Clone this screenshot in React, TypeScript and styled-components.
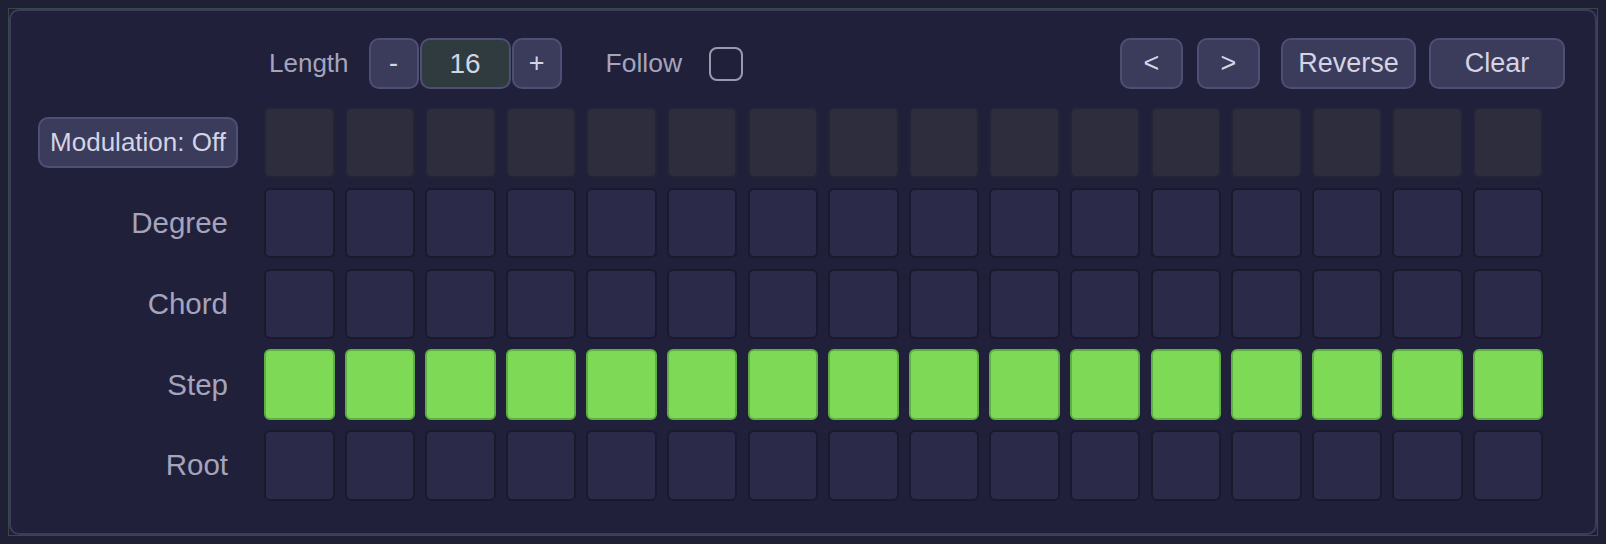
import React from "react";
import styled, { createGlobalStyle } from "styled-components";

const Global = createGlobalStyle`
  html, body { background: #1f1f35; }
  body { margin: 8px; font-family: "Liberation Sans", Arial, sans-serif; }
  * { box-sizing: border-box; }
`;

const Frame = styled.div`
  height: 528px;
  border: 1px solid #3a4748;
  background: #1f1f35;
  display: flex;
`;

const Panel = styled.div`
  flex: 1;
  border: 2px solid #3b3b5c;
  border-radius: 10px;
  background: #20203a;
  padding: 27px 30px 0 27px;
  display: flex;
  flex-direction: column;
`;

const Toolbar = styled.div`
  display: flex;
  align-items: center;
  height: 51px;
  padding-left: 231px;
`;

const ToolLabel = styled.span<{ $gap?: number; $ml?: number; $size?: number }>`
  font-size: ${(p) => p.$size ?? 26}px;
  color: #a4a4bc;
  margin-left: ${(p) => p.$ml ?? 0}px;
  margin-right: ${(p) => p.$gap ?? 20}px;
`;

const Btn = styled.button<{ $w: number; $ml?: number }>`
  width: ${(p) => p.$w}px;
  height: 51px;
  margin-left: ${(p) => p.$ml ?? 0}px;
  background: #3b3b5b;
  border: 2px solid #4f4f74;
  border-radius: 10px;
  color: #d4d4e4;
  font-family: "Liberation Sans", Arial, sans-serif;
  font-size: 27px;
  padding: 0;
  display: flex;
  align-items: center;
  justify-content: center;
`;

const ValueBox = styled.div`
  width: 91px;
  height: 51px;
  margin: 0 1px;
  background: #2f3b3e;
  border: 2px solid #4f4f74;
  border-radius: 10px;
  color: #d4d4e4;
  font-size: 28px;
  display: flex;
  align-items: center;
  justify-content: center;
`;

const Check = styled.div`
  width: 34px;
  height: 34px;
  border: 2px solid #9a9aae;
  border-radius: 8px;
`;

const Spacer = styled.div`
  flex: 1;
`;

const Rows = styled.div`
  margin-top: 18px;
  display: flex;
  flex-direction: column;
  gap: 10.25px;
`;

const Row = styled.div`
  display: flex;
  align-items: center;
  height: 70.5px;
`;

const LabelCell = styled.div<{ $pad?: number }>`
  width: 200px;
  margin-right: 26px;
  display: flex;
  justify-content: flex-end;
  align-items: center;
  padding-right: ${(p) => p.$pad ?? 10}px;
  font-size: 29.5px;
  color: #a4a4bc;
`;

const ModBtn = styled.button`
  width: 200px;
  height: 51px;
  background: #3b3b5b;
  border: 2px solid #4f4f74;
  border-radius: 10px;
  color: #d4d4e4;
  font-family: "Liberation Sans", Arial, sans-serif;
  font-size: 26px;
  padding: 0;
  white-space: nowrap;
`;

const Cells = styled.div`
  display: grid;
  grid-template-columns: repeat(16, 70.5px);
  column-gap: 10.1px;
`;

const Cell = styled.div<{ $kind: "mod" | "off" | "on" }>`
  height: 70.5px;
  border-radius: 6px;
  border: 2px solid
    ${(p) => (p.$kind === "on" ? "#5fae46" : p.$kind === "mod" ? "#252436" : "#1a192e")};
  background: ${(p) =>
    p.$kind === "on" ? "#7ed957" : p.$kind === "mod" ? "#2e2d3e" : "#2b2a48"};
`;

const rows: { label: string; kind: "mod" | "off" | "on" }[] = [
  { label: "", kind: "mod" },
  { label: "Degree", kind: "off" },
  { label: "Chord", kind: "off" },
  { label: "Step", kind: "on" },
  { label: "Root", kind: "off" },
];

export default function App() {
  return (
    <>
      <Global />
      <Frame>
        <Panel>
          <Toolbar>
            <ToolLabel>Length</ToolLabel>
            <Btn $w={50}>-</Btn>
            <ValueBox>16</ValueBox>
            <Btn $w={50}>+</Btn>
            <ToolLabel $ml={44} $gap={27} $size={26.5}>
              Follow
            </ToolLabel>
            <Check />
            <Spacer />
            <Btn $w={63}>&lt;</Btn>
            <Btn $w={63} $ml={14}>&gt;</Btn>
            <Btn $w={135} $ml={21}>Reverse</Btn>
            <Btn $w={136} $ml={13}>Clear</Btn>
          </Toolbar>
          <Rows>
            {rows.map((r, i) => (
              <Row key={i}>
                {i === 0 ? (
                  <LabelCell $pad={0}>
                    <ModBtn>Modulation: Off</ModBtn>
                  </LabelCell>
                ) : (
                  <LabelCell>{r.label}</LabelCell>
                )}
                <Cells>
                  {Array.from({ length: 16 }).map((_, j) => (
                    <Cell key={j} $kind={r.kind} />
                  ))}
                </Cells>
              </Row>
            ))}
          </Rows>
        </Panel>
      </Frame>
    </>
  );
}
